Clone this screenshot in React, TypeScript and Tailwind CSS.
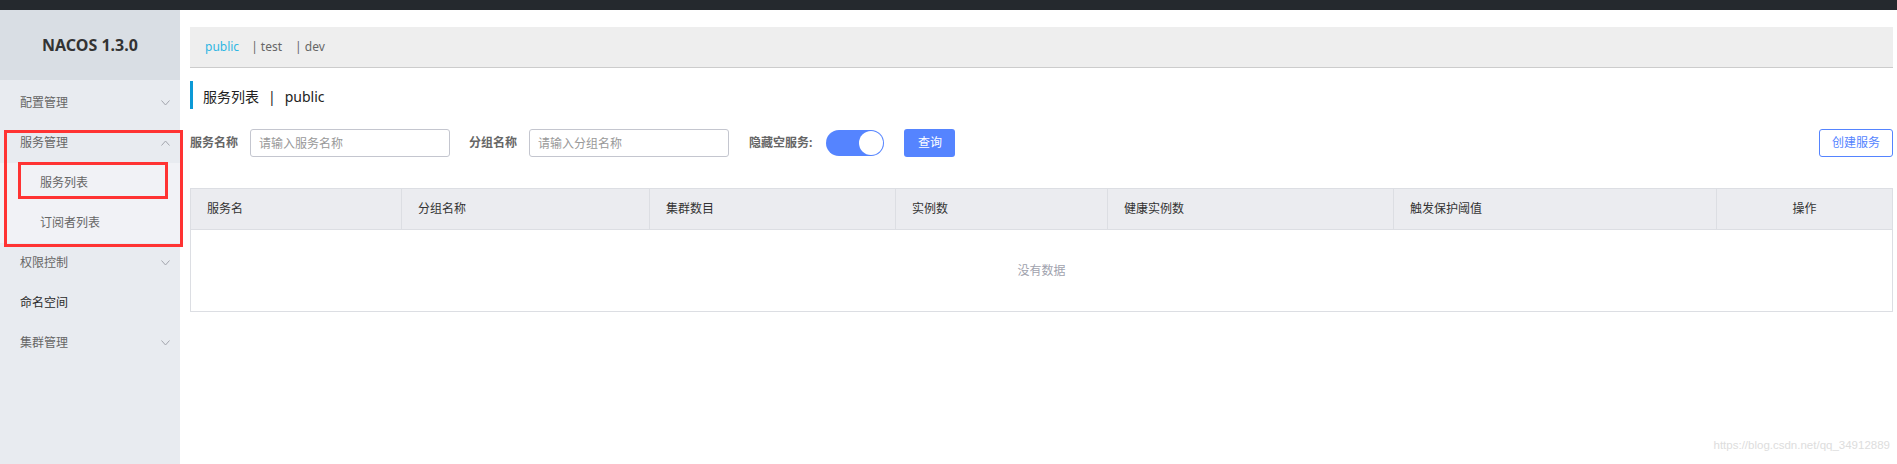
import React from 'react';

const font = { fontFamily: '"Noto Sans", "Noto Sans CJK SC", sans-serif' };

function Chevron({ up }: { up?: boolean }) {
  return (
    <svg width="9" height="6" viewBox="0 0 9 6" className="text-[#a3a6ad]">
      <polyline
        points={up ? '0.5,5.5 4.5,1 8.5,5.5' : '0.5,0.5 4.5,5 8.5,0.5'}
        fill="none"
        stroke="currentColor"
        strokeWidth="1"
      />
    </svg>
  );
}

const menu = [
  { label: '配置管理', arrow: 'down' },
  { label: '服务管理', arrow: 'up' },
  { label: '服务列表', sub: true },
  { label: '订阅者列表', sub: true },
  { label: '权限控制', arrow: 'down' },
  { label: '命名空间', dark: true },
  { label: '集群管理', arrow: 'down' },
];

const columns = ['服务名', '分组名称', '集群数目', '实例数', '健康实例数', '触发保护阈值', '操作'];

export default function App() {
  return (
    <div className="relative flex h-screen flex-col bg-white text-[12px]" style={font}>
      <div className="h-[10px] shrink-0 bg-[#25292e]" />
      <div className="flex flex-1">
        {/* 侧边栏 */}
        <aside className="relative w-[180px] shrink-0 bg-[#e8ebf0]">
          <div className="flex h-[70px] items-center justify-center bg-[#d9dee4] text-[16px] font-bold text-[#333]">
            NACOS 1.3.0
          </div>
          <ul className="mt-[3px]">
            {menu.map((m) => (
              <li
                key={m.label}
                className={
                  'flex h-[40px] items-center justify-between pr-[10px] ' +
                  (m.sub ? 'bg-[#f1f2f6] pl-[40px]' : 'pl-[20px]') +
                  (m.dark ? ' text-[#2a2a2a]' : ' text-[#666]')
                }
              >
                <span>{m.label}</span>
                {m.arrow && <Chevron up={m.arrow === 'up'} />}
              </li>
            ))}
          </ul>
          {/* 标注框 */}
          <div className="absolute left-[4px] top-[120px] h-[117px] w-[179px] border-[3px] border-[#ff3333]" />
          <div className="absolute left-[18px] top-[152px] h-[37px] w-[150px] border-[3px] border-[#ff3333]" />
        </aside>

        {/* 主内容 */}
        <main className="flex-1 pl-[10px] pr-[4px]">
          <div className="mt-[17px] flex h-[41px] items-center border-b border-[#cccccc] bg-[#eeeeee] pl-[15px] text-[#666]">
            <span className="text-[#2fb6e3]">public</span>
            <span className="ml-[12px]">| test</span>
            <span className="ml-[13px]">| dev</span>
          </div>

          <div className="mt-[13px] flex h-[28px] items-center border-l-[3px] border-[#0c99d6] pl-[10px] pt-[3px] text-[14px] text-[#222]">
            <span>服务列表</span>
            <span className="mx-[9px]">|</span>
            <span>public</span>
          </div>

          <div className="mt-[20px] flex h-[28px] items-center">
            <span className="font-bold text-[#666]">服务名称</span>
            <input
              className="ml-[12px] h-[28px] w-[200px] rounded-[3px] border border-[#c4c6cf] px-[8px] text-[12px] outline-none placeholder:text-[#999]"
              placeholder="请输入服务名称"
            />
            <span className="ml-[19px] font-bold text-[#666]">分组名称</span>
            <input
              className="ml-[12px] h-[28px] w-[200px] rounded-[3px] border border-[#c4c6cf] px-[8px] text-[12px] outline-none placeholder:text-[#999]"
              placeholder="请输入分组名称"
            />
            <span className="ml-[20px] font-bold text-[#666]">隐藏空服务:</span>
            <div className="ml-[14px] flex h-[26px] w-[58px] items-center justify-end rounded-full bg-[#5584ff] p-[1px]">
              <div className="h-[24px] w-[24px] rounded-full bg-white" />
            </div>
            <button className="ml-[20px] h-[28px] w-[51px] rounded-[3px] bg-[#5584ff] text-white">查询</button>
            <button className="ml-auto h-[28px] w-[74px] rounded-[3px] border border-[#5584ff] text-[#5584ff]">
              创建服务
            </button>
          </div>

          <div className="mt-[31px] border border-[#dcdee3]">
            <div className="grid h-[41px] grid-cols-[211px_248px_246px_212px_286px_323px_1fr] border-b border-[#dcdee3] bg-[#ebecf0] text-[#333]">
              {columns.map((c, i) => (
                <div
                  key={c}
                  className={
                    'flex items-center ' +
                    (i === columns.length - 1 ? 'justify-center' : 'border-r border-[#dcdee3] pl-[16px]')
                  }
                >
                  {c}
                </div>
              ))}
            </div>
            <div className="flex h-[81px] items-center justify-center text-[#a0a2ad]">没有数据</div>
          </div>
        </main>
      </div>
      <div
        className="absolute bottom-[10px] right-[7px] text-[11.5px] text-[#dddddd]"
        style={{ fontFamily: '"Liberation Sans", sans-serif' }}
      >
        https://blog.csdn.net/qq_34912889
      </div>
    </div>
  );
}
